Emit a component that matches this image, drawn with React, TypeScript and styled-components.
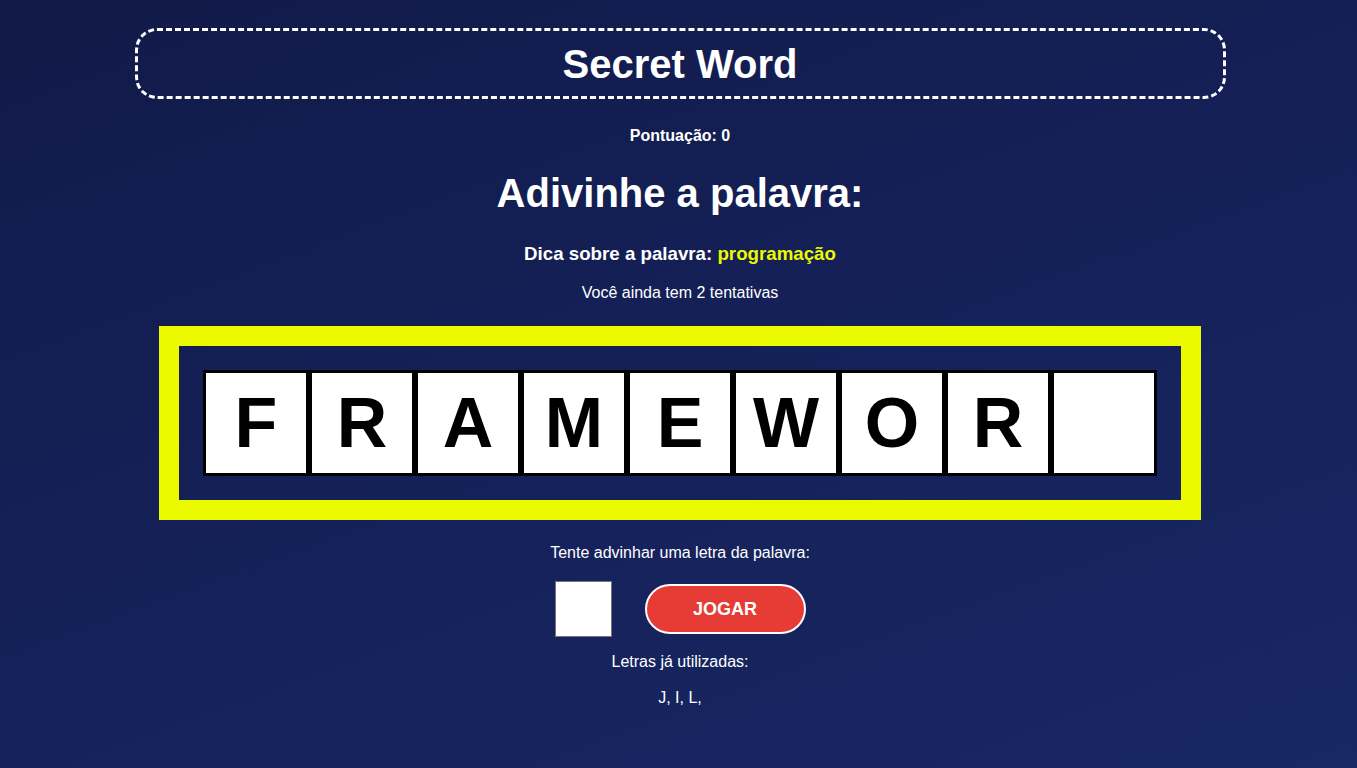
import React, { ChangeEvent, useState } from 'react';
import styled, { createGlobalStyle } from 'styled-components';

const GlobalStyle = createGlobalStyle`
  * {
    box-sizing: border-box;
  }
  html, body {
    margin: 0;
    padding: 0;
    min-height: 100%;
  }
  body {
    font-family: "Liberation Sans", Arial, sans-serif;
    color: #fff;
    background: linear-gradient(160deg, #111a48 0%, #15215a 55%, #182864 100%);
    min-height: 768px;
  }
`;

const Page = styled.div`
  display: flex;
  flex-direction: column;
  align-items: center;
  padding-top: 28px;
  padding-left: 3px;
  text-align: center;
`;

const TitleBox = styled.header`
  width: 1091px;
  height: 71px;
  border: 3px dashed #fff;
  border-radius: 22px;
  display: flex;
  align-items: center;
  justify-content: center;
`;

const Title = styled.h1`
  margin: 0;
  font-size: 40px;
  line-height: 46px;
  font-weight: 700;
`;

const Score = styled.p`
  margin: 28px 0 0;
  font-size: 16px;
  line-height: 18px;
  font-weight: 700;
`;

const Heading = styled.h2`
  margin: 25px 0 0;
  font-size: 40px;
  line-height: 46px;
  font-weight: 700;
`;

const Hint = styled.h3`
  margin: 27px 0 0;
  font-size: 18.72px;
  line-height: 21px;
  font-weight: 700;
`;

const HintWord = styled.span`
  color: #ecfa00;
`;

const Text = styled.p<{ gap: number }>`
  margin: ${props => props.gap}px 0 0;
  font-size: 16px;
  line-height: 18px;
`;

const WordFrame = styled.div`
  margin-top: 24px;
  border: 20px solid #ecfa00;
  padding: 24px;
  display: flex;
`;

const LetterBox = styled.div`
  width: 106px;
  height: 106px;
  border: 3px solid #000;
  background: #fff;
  display: flex;
  align-items: center;
  justify-content: center;
  color: #000;
  font-size: 70px;
  font-weight: 700;
  line-height: 1;
`;

const GuessForm = styled.form`
  margin-top: 19px;
  display: flex;
  align-items: center;
  gap: 33px;
`;

const LetterInput = styled.input`
  width: 57px;
  height: 56px;
  border: 1px solid #767676;
  background: #fff;
  font-size: 40px;
  text-align: center;
  font-family: inherit;
`;

const PlayButton = styled.button`
  width: 161px;
  height: 50px;
  border: 2px solid #fff;
  border-radius: 25px;
  background: #e63c35;
  color: #fff;
  font-family: inherit;
  font-size: 18px;
  font-weight: 700;
  text-transform: uppercase;
  cursor: pointer;
`;

const word = 'FRAMEWORK';
const guessed = ['F', 'R', 'A', 'M', 'E', 'W', 'O'];

export default function App() {
  const [letter, setLetter] = useState('');
  const onChange = (e: ChangeEvent<HTMLInputElement>) => setLetter(e.currentTarget.value);

  return (
    <>
      <GlobalStyle />
      <Page>
        <TitleBox>
          <Title>Secret Word</Title>
        </TitleBox>
        <Score>Pontuação: 0</Score>
        <Heading>Adivinhe a palavra:</Heading>
        <Hint>
          Dica sobre a palavra: <HintWord>programação</HintWord>
        </Hint>
        <Text gap={20}>Você ainda tem 2 tentativas</Text>

        <WordFrame>
          {word.split('').map((l, i) => (
            <LetterBox key={i}>{guessed.includes(l) ? l : ''}</LetterBox>
          ))}
        </WordFrame>

        <Text gap={24}>Tente advinhar uma letra da palavra:</Text>
        <GuessForm onSubmit={e => e.preventDefault()}>
          <LetterInput type="text" maxLength={1} value={letter} onChange={onChange} />
          <PlayButton>Jogar</PlayButton>
        </GuessForm>
        <Text gap={16}>Letras já utilizadas:</Text>
        <Text gap={18}>J, I, L,</Text>
      </Page>
    </>
  );
}
